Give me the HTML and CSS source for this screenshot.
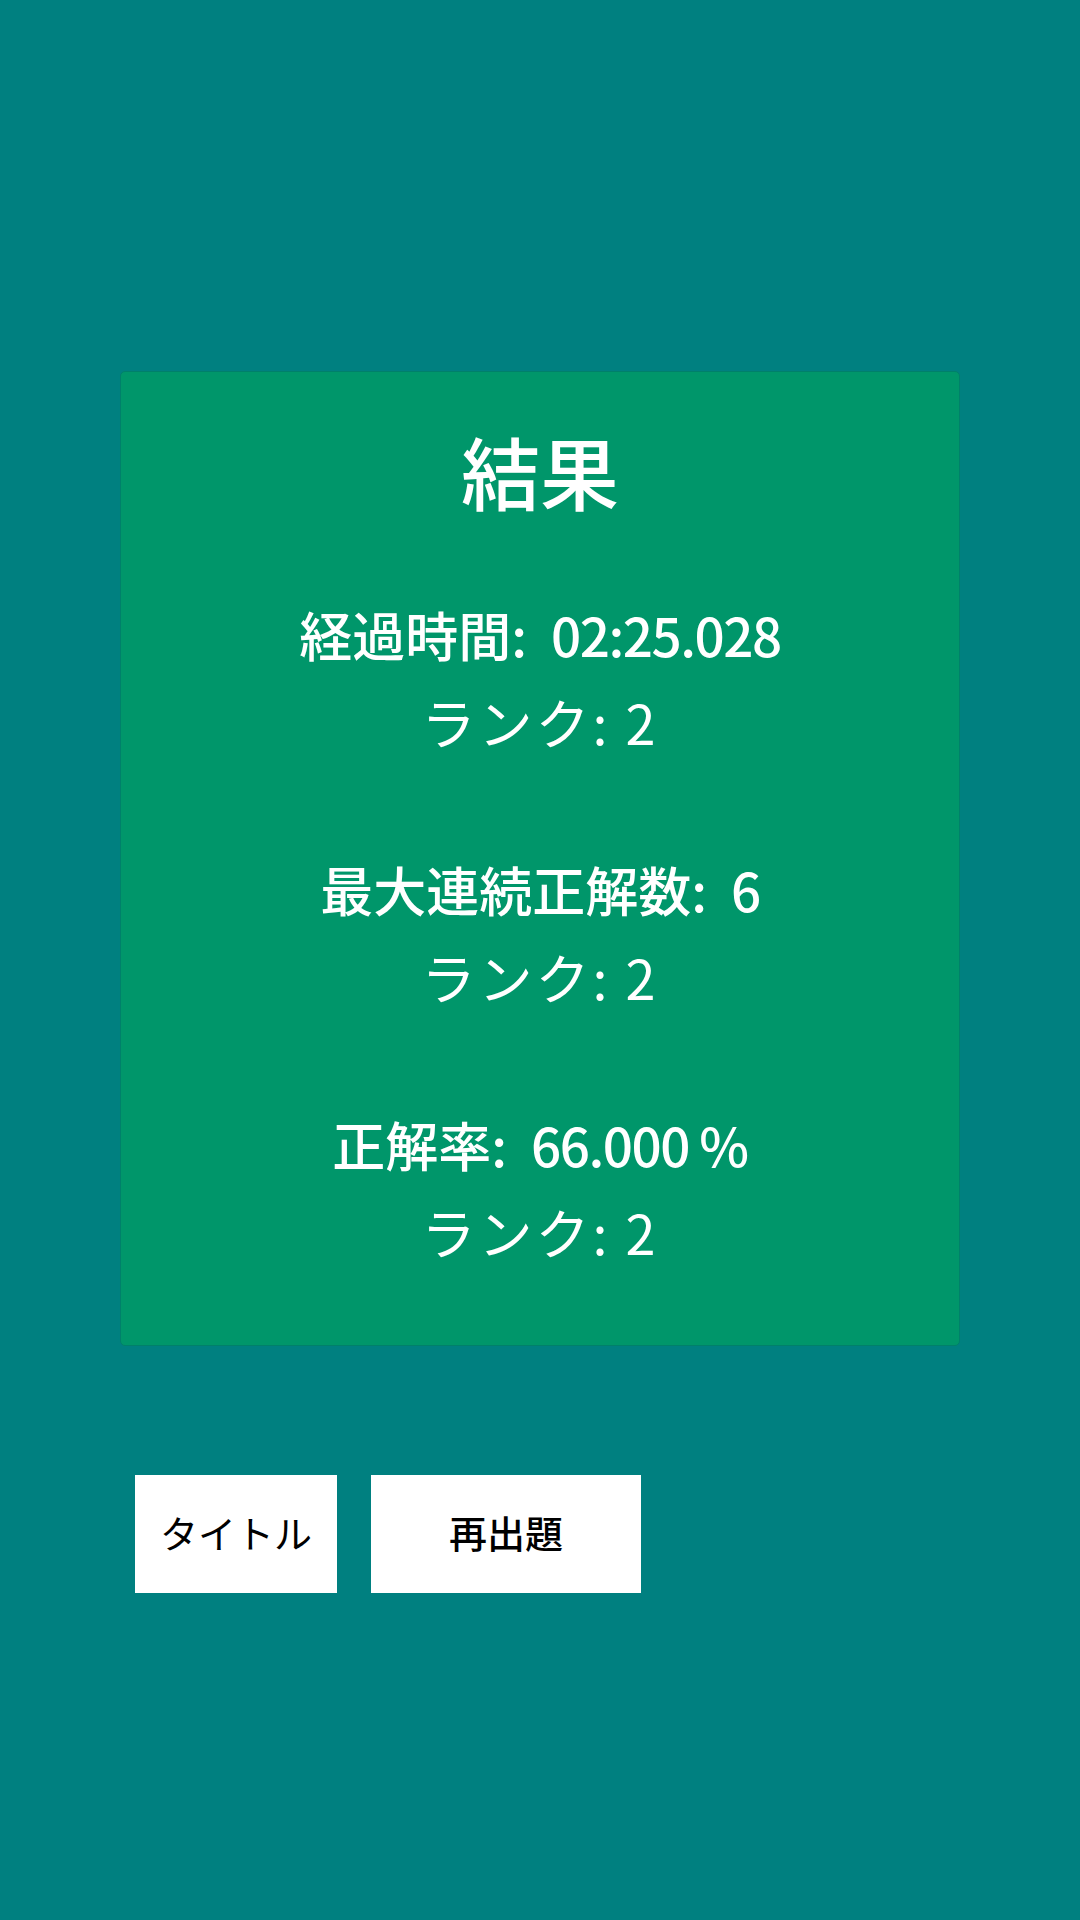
FILE: index.html
```html
<!DOCTYPE html>
<html lang="ja">
<head>
    <title>結果</title>
    <link rel="stylesheet" href="styles.css">
</head>
<body>
    <div class="container">
        <div class="result-card">
            <h1>結果</h1>
            <div class="result-group">
                <p class="score">経過時間: <span class="digits">02:25.028</span></p>
                <p class="rank">ランク: 2</p>
            </div>
            <div class="result-group">
                <p class="score">最大連続正解数: <span class="digits">6</span></p>
                <p class="rank">ランク: 2</p>
            </div>
            <div class="result-group">
                <p class="score">正解率: <span class="digits">66.000 %</span></p>
                <p class="rank">ランク: 2</p>
            </div>
        </div>
        <div class="button-group">
            <button class="title-button">タイトル</button>
            <button class="retry-button">再出題</button>
        </div>
    </div>
</body>
</html>
```
FILE: styles.css
```css
body {
    margin: 0;
    height: 1920px;
    overflow: hidden;
    background-color: #008080;
    font-family: "Noto Sans CJK JP", "Noto Sans", sans-serif;
}
.container {
    padding: 371px 120px 0 120px;
}
.result-card {
    box-sizing: border-box;
    height: 975px;
    padding: 57px 0 0;
    background-color: #00966a;
    border: 1px solid #00806a;
    border-radius: 5px;
    color: white;
    text-align: center;
}
h1 {
    margin: 0 0 80px;
    font-size: 79px;
    line-height: 84px;
    font-weight: 500;
}
.result-group {
    margin-bottom: 85px;
}
.result-group p {
    margin: 0;
    line-height: 83px;
}
.score {
    font-size: 53px;
    font-weight: 500;
    word-spacing: 12px;
}
.digits {
    letter-spacing: -1.5px;
    word-spacing: 0;
}
.rank {
    padding-top: 4px;
    font-size: 54px;
    font-weight: 400;
    letter-spacing: 3px;
}
.button-group {
    display: flex;
    gap: 34px;
    margin: 129px 0 0 15px;
}
button {
    height: 118px;
    padding: 0 0 6px;
    background-color: white;
    border: none;
    color: black;
    font-family: inherit;
    font-size: 38px;
}
.title-button {
    width: 202px;
}
.retry-button {
    width: 270px;
    font-weight: 500;
}
```
